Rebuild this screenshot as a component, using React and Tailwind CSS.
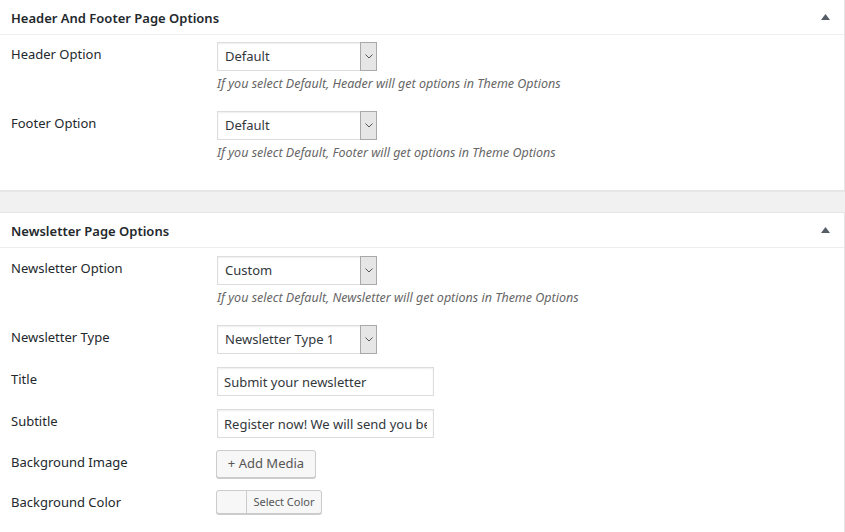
import React from 'react';

const font = { fontFamily: '"Segoe UI", "Noto Sans", "Open Sans", sans-serif' };

const Select = ({ value }) => (
  <div className="flex h-[29px] w-[160px] border border-[#ddd] bg-white shadow-[inset_0_1px_2px_rgba(0,0,0,0.07)]">
    <div className="flex flex-1 items-center pl-[7px] text-[13px] text-[#32373c]">{value}</div>
    <div className="-my-px -mr-px flex w-[17px] items-center justify-center border border-[#a9a9a9] bg-[#e6e6e6]">
      <svg width="8" height="5" viewBox="0 0 8 5" fill="none">
        <path d="M0.5 0.5 L4 4 L7.5 0.5" stroke="#555" strokeWidth="1" />
      </svg>
    </div>
  </div>
);

const Input = ({ value }) => (
  <input
    type="text"
    readOnly
    value={value}
    className="block h-[29px] w-[217px] border border-[#ddd] bg-white px-[6px] text-[13px] text-[#32373c] shadow-[inset_0_1px_2px_rgba(0,0,0,0.07)] outline-none"
  />
);

const Desc = ({ children }) => (
  <p className="mt-[4px] text-[12.5px] leading-[18px] italic text-[#666]">{children}</p>
);

const Row = ({ label, children, className = '' }) => (
  <div className={`flex ${className}`}>
    <div className="w-[206px] shrink-0 pt-[2px] text-[13px] leading-[20px] text-[#23282d]">{label}</div>
    <div>{children}</div>
  </div>
);

const Panel = ({ title, children, className = '' }) => (
  <div className={`border-y border-r border-[#e5e5e5] bg-white shadow-[0_1px_1px_rgba(0,0,0,0.04)] ${className}`}>
    <div className="flex h-[35px] items-center justify-between border-b border-[#eee] pl-[11px] pr-[14px] pt-[3px]">
      <h2 className="text-[13px] font-semibold text-[#23282d]">{title}</h2>
      <svg width="9" height="6" viewBox="0 0 9 6" className="-mt-[3px]">
        <path d="M0 6 L4.5 0 L9 6 Z" fill="#555d66" />
      </svg>
    </div>
    {children}
  </div>
);

export default function App() {
  return (
    <div className="h-[532px] w-[845px] overflow-hidden bg-[#f1f1f1]" style={font}>
      <Panel title="Header And Footer Page Options" className="-mt-px w-[845px]">
        <div className="pl-[11px] pt-[7px] pb-[28px]">
          <Row label="Header Option">
            <Select value="Default" />
            <Desc>If you select Default, Header will get options in Theme Options</Desc>
          </Row>
          <Row label="Footer Option" className="mt-[18px]">
            <Select value="Default" />
            <Desc>If you select Default, Footer will get options in Theme Options</Desc>
          </Row>
        </div>
      </Panel>

      <Panel title="Newsletter Page Options" className="mt-[21px] w-[845px]">
        <div className="pl-[11px] pt-[8px] pb-[20px]">
          <Row label="Newsletter Option">
            <Select value="Custom" />
            <Desc>If you select Default, Newsletter will get options in Theme Options</Desc>
          </Row>
          <Row label="Newsletter Type" className="mt-[18px]">
            <Select value="Newsletter Type 1" />
          </Row>
          <Row label="Title" className="mt-[13px]">
            <Input value="Submit your newsletter" />
          </Row>
          <Row label="Subtitle" className="mt-[13px]">
            <Input value="Register now! We will send you best offers" />
          </Row>
          <Row label="Background Image" className="mt-[12px]">
            <button className="-ml-px flex h-[28px] w-[100px] items-center justify-center rounded-[3px] border border-[#ccc] bg-[#f7f7f7] text-[13px] text-[#555] shadow-[0_1px_0_#ccc]">
              + Add Media
            </button>
          </Row>
          <Row label="Background Color" className="mt-[12px]">
            <div className="-ml-px flex h-[24px] w-[106px] overflow-hidden rounded-[3px] border border-[#ccc] bg-[#f7f7f7] shadow-[0_1px_0_#ccc]">
              <div className="w-[30px] border-r border-[#ccc]" />
              <div className="flex flex-1 items-center justify-center text-[11px] text-[#555]">Select Color</div>
            </div>
          </Row>
        </div>
      </Panel>
    </div>
  );
}
